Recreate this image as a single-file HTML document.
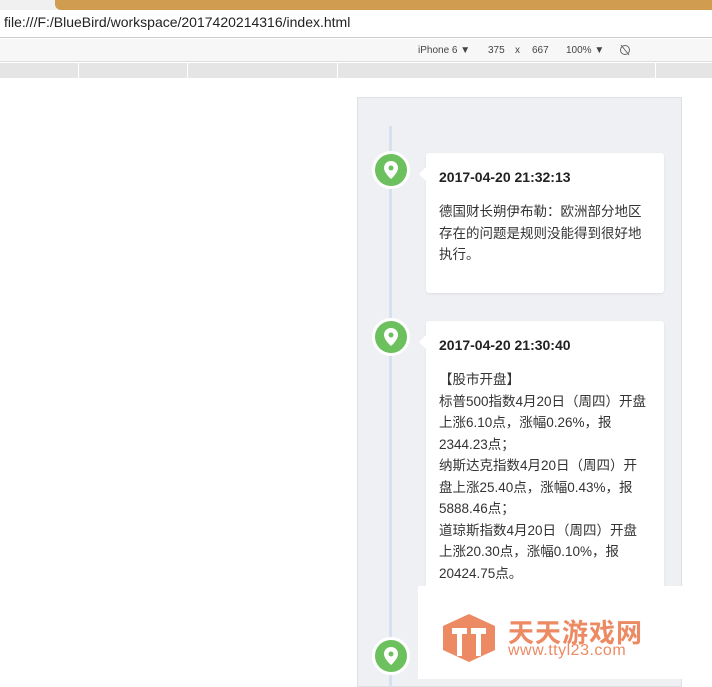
<!DOCTYPE html>
<html><head><meta charset="utf-8"><style>
*{margin:0;padding:0;box-sizing:border-box}
body{width:712px;height:679px;overflow:hidden;background:#fff;font-family:"Liberation Sans","Noto Sans CJK SC",sans-serif;position:relative}
.abs{position:absolute}
.card{position:absolute;left:426px;width:238px;background:#fff;border-radius:3px;box-shadow:0 1px 2px rgba(0,0,0,.08);padding:16px 10px 16px 13px}
.card:before{content:"";position:absolute;left:-7px;top:14px;border:7px solid transparent;border-left:0;border-right-color:#fff}
.card h3{font-size:14px;font-weight:bold;color:#222;margin-bottom:16px}
.card p{font-size:13.5px;line-height:21.5px;color:#333;white-space:nowrap}
.dot{position:absolute;left:372px;width:38px;height:38px;border-radius:50%;background:#6cc05e;border:3px solid #fff;display:flex;align-items:center;justify-content:center}
.tb{position:absolute;top:45px;font-size:10px;color:#444}
</style></head><body>
<div class="abs" style="left:0;top:0;width:712px;height:12px;background:#f0f0f0"></div>
<div class="abs" style="left:55px;top:0;width:657px;height:10px;background:#d09c50;border-radius:0 0 0 6px"></div>
<div class="abs" style="left:0;top:10px;width:712px;height:28px;background:#fff;border-bottom:1px solid #ccc"></div>
<div class="abs" style="left:4px;top:14px;font-size:14px;color:#222">file:///F:/BlueBird/workspace/2017420214316/index.html</div>
<div class="abs" style="left:0;top:39px;width:712px;height:23px;background:#f7f7f7;border-bottom:1px solid #ddd"></div>
<div class="tb" style="left:418px">iPhone 6 ▼</div>
<div class="tb" style="left:488px">375</div>
<div class="tb" style="left:515px">x</div>
<div class="tb" style="left:532px">667</div>
<div class="tb" style="left:566px">100% ▼</div>
<svg class="abs" style="left:619px;top:44px" width="12" height="12" viewBox="0 0 12 12"><circle cx="6" cy="6" r="4.5" fill="none" stroke="#666"/><path d="M2 1L10 11" stroke="#666"/></svg>
<div class="abs" style="left:0;top:63px;width:712px;height:15px;background:#e5e5e5"></div>
<div class="abs" style="left:78px;top:63px;width:1px;height:15px;background:#fff"></div>
<div class="abs" style="left:187px;top:63px;width:1px;height:15px;background:#fff"></div>
<div class="abs" style="left:337px;top:63px;width:1px;height:15px;background:#fff"></div>
<div class="abs" style="left:655px;top:63px;width:1px;height:15px;background:#fff"></div>
<div class="abs" style="left:357px;top:97px;width:325px;height:590px;background:#eef0f4;border:1px solid #dde0e5"></div>
<div class="abs" style="left:389px;top:126px;width:3px;height:560px;background:#d6e0ee"></div>
<div class="dot" style="top:151px"><svg width="14" height="18" viewBox="0 0 14 18"><path d="M7 0C3 0 0 3 0 7c0 5 7 11 7 11s7-6 7-11c0-4-3-7-7-7z" fill="#fff"/><circle cx="7" cy="7" r="2.5" fill="#6cc05e"/></svg></div>
<div class="dot" style="top:318px"><svg width="14" height="18" viewBox="0 0 14 18"><path d="M7 0C3 0 0 3 0 7c0 5 7 11 7 11s7-6 7-11c0-4-3-7-7-7z" fill="#fff"/><circle cx="7" cy="7" r="2.5" fill="#6cc05e"/></svg></div>
<div class="dot" style="top:637px"><svg width="14" height="18" viewBox="0 0 14 18"><path d="M7 0C3 0 0 3 0 7c0 5 7 11 7 11s7-6 7-11c0-4-3-7-7-7z" fill="#fff"/><circle cx="7" cy="7" r="2.5" fill="#6cc05e"/></svg></div>
<div class="card" style="top:153px;height:140px"><h3>2017-04-20 21:32:13</h3><p>德国财长朔伊布勒：欧洲部分地区<br>存在的问题是规则没能得到很好地<br>执行。</p></div>
<div class="card" style="top:321px;height:280px"><h3>2017-04-20 21:30:40</h3><p>【股市开盘】<br>标普500指数4月20日（周四）开盘<br>上涨6.10点，涨幅0.26%，报<br>2344.23点；<br>纳斯达克指数4月20日（周四）开<br>盘上涨25.40点，涨幅0.43%，报<br>5888.46点；<br>道琼斯指数4月20日（周四）开盘<br>上涨20.30点，涨幅0.10%，报<br>20424.75点。</p></div>
<div class="abs" style="left:418px;top:586px;width:294px;height:93px;background:#fff"></div>
<svg class="abs" style="left:441px;top:612px" width="56" height="52" viewBox="0 0 56 52"><path d="M28 2L54 14V38L28 50L2 38V14Z" fill="#ec8a63"/><path d="M11 16H26V22H21V44H16V22H11Z M30 16H45V22H40V44H35V22H30Z" fill="#fff"/></svg>
<div class="abs" style="left:508px;top:613px;font-size:26px;font-weight:bold;color:#ec8a63;letter-spacing:1px">天天游戏网</div>
<div class="abs" style="left:508px;top:642px;font-size:16px;color:#ec8a63;letter-spacing:0.5px">www.ttyl23.com</div>
</body></html>
